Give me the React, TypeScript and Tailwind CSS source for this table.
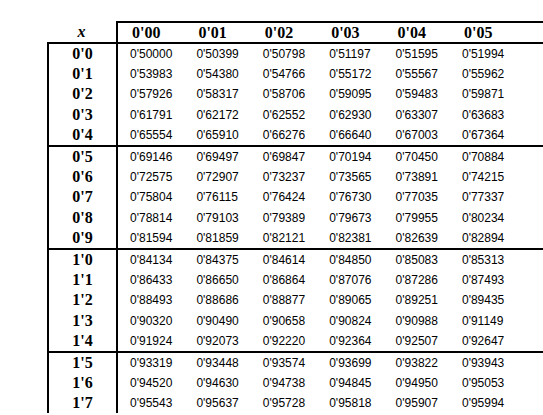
const columns = ["0'00", "0'01", "0'02", "0'03", "0'04", "0'05"];

const groups: { label: string; values: string[] }[][] = [
  [
    { label: "0'0", values: ["0'50000", "0'50399", "0'50798", "0'51197", "0'51595", "0'51994"] },
    { label: "0'1", values: ["0'53983", "0'54380", "0'54766", "0'55172", "0'55567", "0'55962"] },
    { label: "0'2", values: ["0'57926", "0'58317", "0'58706", "0'59095", "0'59483", "0'59871"] },
    { label: "0'3", values: ["0'61791", "0'62172", "0'62552", "0'62930", "0'63307", "0'63683"] },
    { label: "0'4", values: ["0'65554", "0'65910", "0'66276", "0'66640", "0'67003", "0'67364"] },
  ],
  [
    { label: "0'5", values: ["0'69146", "0'69497", "0'69847", "0'70194", "0'70450", "0'70884"] },
    { label: "0'6", values: ["0'72575", "0'72907", "0'73237", "0'73565", "0'73891", "0'74215"] },
    { label: "0'7", values: ["0'75804", "0'76115", "0'76424", "0'76730", "0'77035", "0'77337"] },
    { label: "0'8", values: ["0'78814", "0'79103", "0'79389", "0'79673", "0'79955", "0'80234"] },
    { label: "0'9", values: ["0'81594", "0'81859", "0'82121", "0'82381", "0'82639", "0'82894"] },
  ],
  [
    { label: "1'0", values: ["0'84134", "0'84375", "0'84614", "0'84850", "0'85083", "0'85313"] },
    { label: "1'1", values: ["0'86433", "0'86650", "0'86864", "0'87076", "0'87286", "0'87493"] },
    { label: "1'2", values: ["0'88493", "0'88686", "0'88877", "0'89065", "0'89251", "0'89435"] },
    { label: "1'3", values: ["0'90320", "0'90490", "0'90658", "0'90824", "0'90988", "0'91149"] },
    { label: "1'4", values: ["0'91924", "0'92073", "0'92220", "0'92364", "0'92507", "0'92647"] },
  ],
  [
    { label: "1'5", values: ["0'93319", "0'93448", "0'93574", "0'93699", "0'93822", "0'93943"] },
    { label: "1'6", values: ["0'94520", "0'94630", "0'94738", "0'94845", "0'94950", "0'95053"] },
    { label: "1'7", values: ["0'95543", "0'95637", "0'95728", "0'95818", "0'95907", "0'95994"] },
  ],
];

export default function App() {
  return (
    <div className="w-[543px] h-[415px] overflow-hidden bg-white text-black">
      <div className="pt-[21px] pl-[47px] w-[600px]">
        {/* Header */}
        <div className="flex">
          <div className="w-[69px] h-[21px] flex items-center justify-center font-['Liberation_Serif',serif] text-[16px] font-bold italic">
            x
          </div>
          <div className="flex-1 border-t-2 border-l-2 border-black grid grid-cols-[repeat(7,66.4px)] h-[21px]">
            {columns.map((c) => (
              <div key={c} className="pl-[14px] flex items-center font-['Liberation_Serif',serif] text-[16px] font-bold leading-none">
                {c}
              </div>
            ))}
          </div>
        </div>

        {/* Body groups */}
        {groups.map((group, gi) => (
          <div key={gi} className={`flex border-t-2 border-black ${gi === groups.length - 1 ? 'pb-[12px]' : ''}`}>
            <div className="w-[69px] border-l-2 border-black">
              {group.map((row) => (
                <div key={row.label} className="h-[20.2px] flex items-center justify-center font-['Liberation_Serif',serif] text-[16px] font-bold leading-none">
                  {row.label}
                </div>
              ))}
            </div>
            <div className="flex-1 border-l-2 border-black">
              {group.map((row) => (
                <div key={row.label} className="h-[20.2px] grid grid-cols-[repeat(7,66.4px)]">
                  {row.values.map((v, i) => (
                    <div key={i} className="pl-[12px] flex items-center font-['Liberation_Sans',Arial,sans-serif] text-[12px] leading-none">
                      {v}
                    </div>
                  ))}
                </div>
              ))}
            </div>
          </div>
        ))}
      </div>
    </div>
  );
}
